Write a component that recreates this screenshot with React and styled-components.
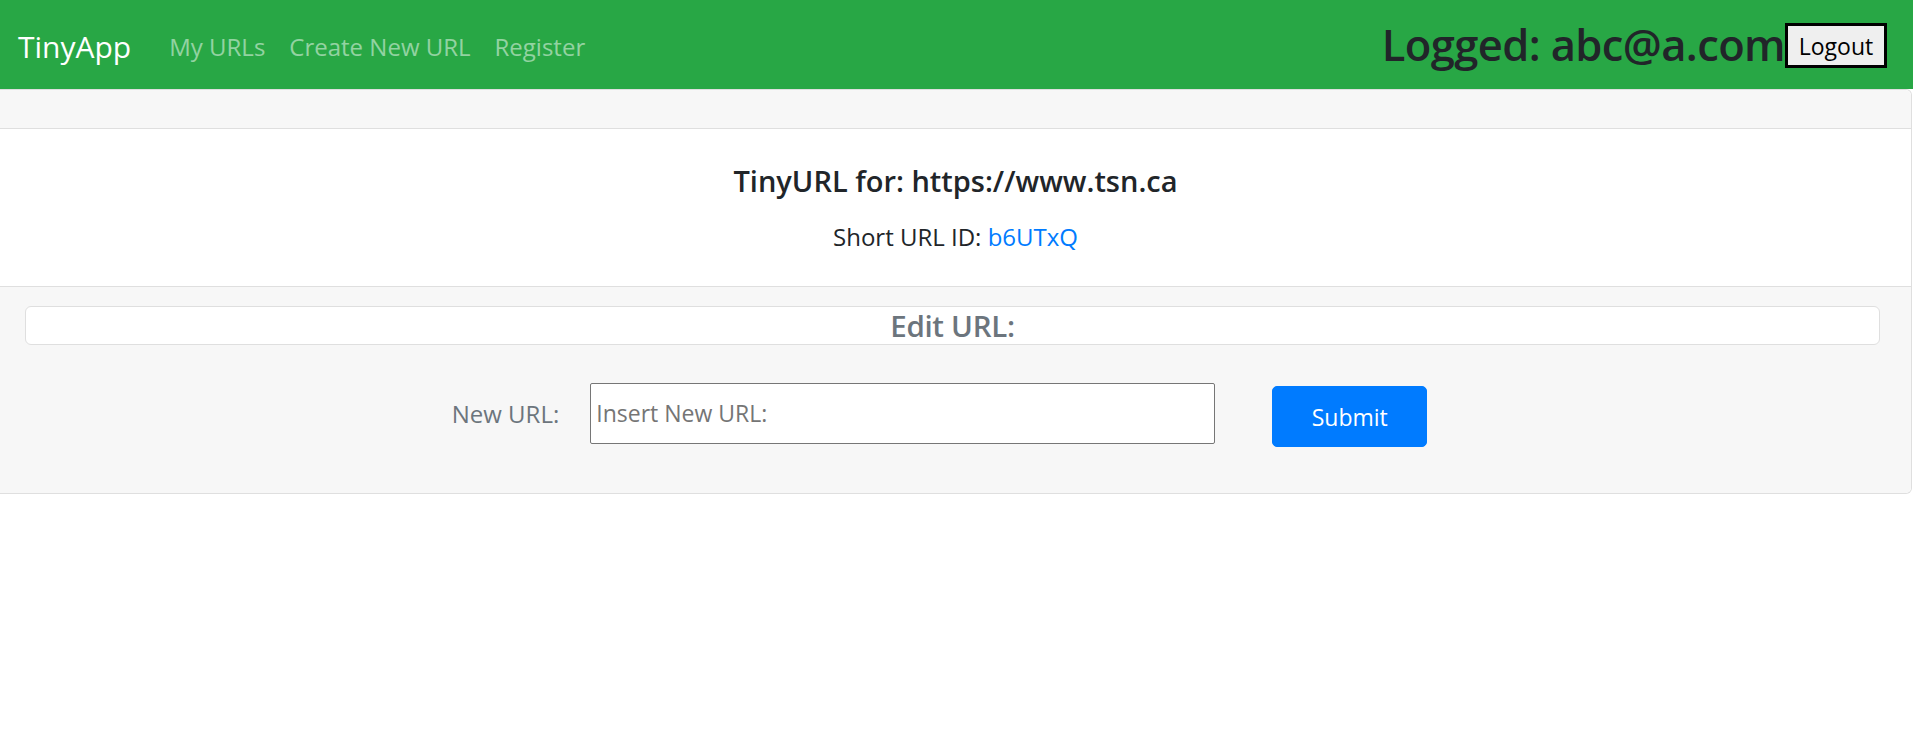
import React from 'react';
import styled, { createGlobalStyle } from 'styled-components';

const GlobalStyle = createGlobalStyle`
  html, body {
    margin: 0;
    padding: 0;
    background: #fff;
  }
  body {
    font-family: "Open Sans", "Noto Sans", "Liberation Sans", sans-serif;
    color: #212529;
  }
  * { box-sizing: border-box; }
`;

const Navbar = styled.nav`
  height: 89px;
  background: #28a745;
  display: flex;
  align-items: center;
  padding: 0 26px 0 18px;
`;

const Brand = styled.a`
  color: #fff;
  font-size: 30px;
  margin-right: 26px;
  padding-top: 4px;
  text-decoration: none;
`;

const NavLinks = styled.div`
  display: flex;
  align-items: center;
  flex: 1;
  padding-top: 4px;
`;

const NavLink = styled.a`
  color: rgba(255, 255, 255, 0.5);
  font-size: 24px;
  padding: 0 12px;
  text-decoration: none;
`;

const UserBox = styled.div`
  display: flex;
  align-items: center;
`;

const Logged = styled.h2`
  margin: 0;
  font-size: 43.5px;
  font-weight: 600;
  color: #212529;
  letter-spacing: -0.6px;
`;

const LogoutButton = styled.button`
  height: 45px;
  width: 102px;
  margin-top: 2px;
  border: 3px solid #000;
  background: #efefef;
  color: #000;
  font-family: inherit;
  font-size: 23px;
  padding: 0;
`;

const Card = styled.section`
  border: 1px solid #dfdfdf;
  border-left: 0;
  border-radius: 0 6px 6px 0;
  margin-right: 1px;
`;

const CardHeader = styled.div`
  height: 39px;
  background: #f7f7f7;
  border-bottom: 1px solid #dfdfdf;
  border-top-right-radius: 6px;
`;

const CardBody = styled.div`
  height: 157px;
  background: #fff;
  display: flex;
  flex-direction: column;
  align-items: center;
  padding-top: 32px;
`;

const Title = styled.h5`
  margin: 0;
  font-size: 29px;
  font-weight: 600;
  line-height: 40px;
  color: #212529;
`;

const Text = styled.p`
  margin: 19px 0 0;
  font-size: 24px;
  line-height: 34px;
`;

const IdLink = styled.a`
  color: #007bff;
  text-decoration: none;
`;

const CardFooter = styled.div`
  background: #f7f7f7;
  border-top: 1px solid #dfdfdf;
  height: 207px;
  padding: 19px 31px 0 25px;
  border-radius: 0 0 6px 0;
`;

const EditBox = styled.div`
  height: 39px;
  background: #fff;
  border: 1px solid #dfdfdf;
  border-radius: 6px;
  display: flex;
  align-items: center;
  justify-content: center;
`;

const EditTitle = styled.h5`
  margin: 0;
  font-size: 29.5px;
  font-weight: 600;
  color: #6c757d;
  letter-spacing: -0.3px;
`;

const FormRow = styled.form`
  display: flex;
  align-items: center;
  justify-content: center;
  margin-top: 34px;
  padding-right: 26px;
`;

const Label = styled.label`
  color: #6c757d;
  font-size: 24px;
  margin-right: 31px;
`;

const Input = styled.input`
  width: 625px;
  height: 61px;
  border: 1px solid #767676;
  border-radius: 2px;
  padding: 0 5px;
  font-family: inherit;
  font-size: 23px;
  background: #fff;
  &::placeholder {
    color: #757575;
  }
`;

const SubmitButton = styled.button`
  width: 155px;
  height: 61px;
  margin-left: 57px;
  margin-top: 7px;
  background: #007bff;
  border: 1px solid #007bff;
  border-radius: 5px;
  color: #fff;
  font-family: inherit;
  font-size: 23px;
`;

export default function App() {
  return (
    <>
      <GlobalStyle />
      <Navbar>
        <Brand href="#">TinyApp</Brand>
        <NavLinks>
          <NavLink href="#">My URLs</NavLink>
          <NavLink href="#">Create New URL</NavLink>
          <NavLink href="#">Register</NavLink>
        </NavLinks>
        <UserBox>
          <Logged>Logged: abc@a.com</Logged>
          <LogoutButton type="button">Logout</LogoutButton>
        </UserBox>
      </Navbar>
      <Card>
        <CardHeader />
        <CardBody>
          <Title>TinyURL for: https://www.tsn.ca</Title>
          <Text>
            Short URL ID: <IdLink href="#">b6UTxQ</IdLink>
          </Text>
        </CardBody>
        <CardFooter>
          <EditBox>
            <EditTitle>Edit URL:</EditTitle>
          </EditBox>
          <FormRow onSubmit={(e) => e.preventDefault()}>
            <Label htmlFor="longURL">New URL:</Label>
            <Input id="longURL" type="text" placeholder="Insert New URL:" />
            <SubmitButton type="submit">Submit</SubmitButton>
          </FormRow>
        </CardFooter>
      </Card>
    </>
  );
}
